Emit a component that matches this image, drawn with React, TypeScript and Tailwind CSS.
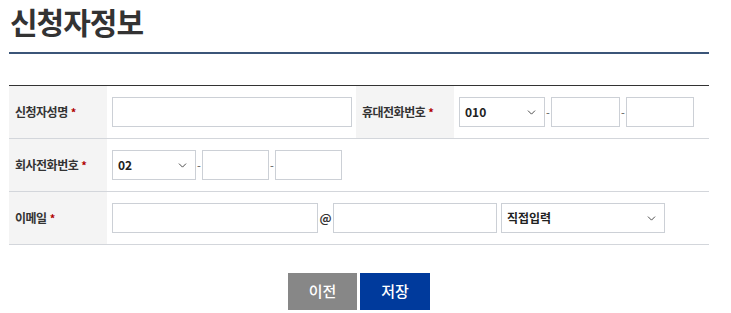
import { ChevronDown } from "lucide-react";

const font = { fontFamily: '"Noto Sans CJK KR", "Noto Sans", sans-serif' };

const Label = ({ text }: { text: string }) => (
  <div className="w-[98px] shrink-0 bg-[#f4f4f4] flex items-center pl-[6px] text-[12px] font-bold text-[#333] tracking-[-0.5px]">
    {text}
    <span className="text-[#b00000] ml-[3px] text-[11px]">*</span>
  </div>
);

const Box = ({ w }: { w: string }) => (
  <div className={`${w} h-[30px] border border-[#ccd0d6] bg-white shrink-0`} />
);

const Select = ({ w, value }: { w: string; value: string }) => (
  <div
    className={`${w} h-[30px] border border-[#ccd0d6] bg-white shrink-0 flex items-center justify-between pl-[5px] pr-[6px] text-[12px] font-bold text-[#222]`}
  >
    <span>{value}</span>
    <ChevronDown size={13} strokeWidth={1.6} className="text-[#333]" />
  </div>
);

const Dash = () => <span className="w-[6px] text-center text-[11px] text-[#555]">-</span>;

export default function App() {
  return (
    <div className="w-[731px] h-[313px] bg-white" style={font}>
      <div className="pl-[9px] pr-[22px]">
        <h1 className="pt-[1px] pl-[1px] text-[30px] leading-[40px] font-bold text-[#333] tracking-[-1px]">
          신청자정보
        </h1>
        <div className="mt-[11px] h-[2px] bg-[#3b5578]" />
        <div className="mt-[31px] border-t border-[#333]">
          <div className="flex h-[53px] border-b border-[#d3d6db]">
            <Label text="신청자성명" />
            <div className="w-[249px] flex items-center pl-[5px]">
              <Box w="w-[240px]" />
            </div>
            <Label text="휴대전화번호" />
            <div className="flex items-center pl-[5px]">
              <Select w="w-[86px]" value="010" />
              <Dash />
              <Box w="w-[69px]" />
              <Dash />
              <Box w="w-[68px]" />
            </div>
          </div>
          <div className="flex h-[53px] border-b border-[#d3d6db]">
            <Label text="회사전화번호" />
            <div className="flex items-center pl-[5px]">
              <Select w="w-[84px]" value="02" />
              <Dash />
              <Box w="w-[67px]" />
              <Dash />
              <Box w="w-[67px]" />
            </div>
          </div>
          <div className="flex h-[53px] border-b border-[#d3d6db]">
            <Label text="이메일" />
            <div className="flex items-center pl-[5px]">
              <Box w="w-[206px]" />
              <span className="w-[15px] text-center text-[12px] font-bold text-[#333]">@</span>
              <Box w="w-[164px]" />
              <div className="w-[4px]" />
              <Select w="w-[164px]" value="직접입력" />
            </div>
          </div>
        </div>
        <div className="mt-[28px] flex justify-center gap-[3px]">
          <button className="w-[69px] h-[37px] bg-[#878787] text-white text-[15px] font-medium">
            이전
          </button>
          <button className="w-[70px] h-[37px] bg-[#003a9c] text-white text-[15px] font-medium">
            저장
          </button>
        </div>
      </div>
    </div>
  );
}
